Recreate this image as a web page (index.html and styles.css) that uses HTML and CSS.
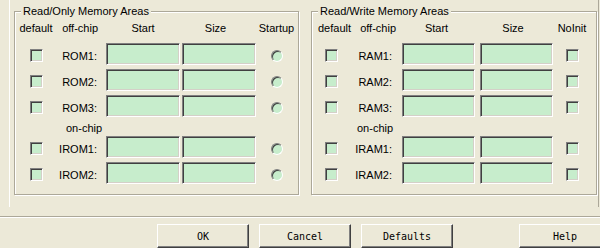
FILE: index.html
```html
<!DOCTYPE html>
<html lang="en">
<head>
    <meta charset="UTF-8">
    <meta name="viewport" content="width=device-width, initial-scale=1.0">
    <title>Memory Areas</title>
    <link rel="stylesheet" href="styles.css">
</head>
<body>
    <div class="page">
        <div class="panel">
            <div class="group group-ro">
                <div class="caption">Read/Only Memory Areas</div>
                <div class="grid grid-ro">
                    <div class="hdr">default</div>
                    <div class="hdr hdr-chip">off-chip</div>
                    <div class="hdr hdr-start">Start</div>
                    <div class="hdr hdr-size">Size</div>
                    <div class="hdr">Startup</div>

                    <div class="chk"></div>
                    <div class="lbl">ROM1:</div>
                    <div class="edit"></div>
                    <div class="edit"></div>
                    <div class="radio"></div>

                    <div class="chk"></div>
                    <div class="lbl">ROM2:</div>
                    <div class="edit"></div>
                    <div class="edit"></div>
                    <div class="radio"></div>

                    <div class="chk"></div>
                    <div class="lbl">ROM3:</div>
                    <div class="edit"></div>
                    <div class="edit"></div>
                    <div class="radio"></div>

                    <div class="onchip">on-chip</div>

                    <div class="chk"></div>
                    <div class="lbl">IROM1:</div>
                    <div class="edit"></div>
                    <div class="edit"></div>
                    <div class="radio"></div>

                    <div class="chk"></div>
                    <div class="lbl">IROM2:</div>
                    <div class="edit"></div>
                    <div class="edit"></div>
                    <div class="radio"></div>
                </div>
            </div>

            <div class="group group-rw">
                <div class="caption">Read/Write Memory Areas</div>
                <div class="grid grid-rw">
                    <div class="hdr hdr-default">default</div>
                    <div class="hdr hdr-chip">off-chip</div>
                    <div class="hdr hdr-start">Start</div>
                    <div class="hdr hdr-size">Size</div>
                    <div class="hdr">NoInit</div>

                    <div class="chk"></div>
                    <div class="lbl">RAM1:</div>
                    <div class="edit"></div>
                    <div class="edit"></div>
                    <div class="chk"></div>

                    <div class="chk"></div>
                    <div class="lbl">RAM2:</div>
                    <div class="edit"></div>
                    <div class="edit"></div>
                    <div class="chk"></div>

                    <div class="chk"></div>
                    <div class="lbl">RAM3:</div>
                    <div class="edit"></div>
                    <div class="edit"></div>
                    <div class="chk"></div>

                    <div class="onchip">on-chip</div>

                    <div class="chk"></div>
                    <div class="lbl">IRAM1:</div>
                    <div class="edit"></div>
                    <div class="edit"></div>
                    <div class="chk"></div>

                    <div class="chk"></div>
                    <div class="lbl">IRAM2:</div>
                    <div class="edit"></div>
                    <div class="edit"></div>
                    <div class="chk"></div>
                </div>
            </div>
        </div>

        <div class="separator"></div>

        <div class="buttons">
            <div class="btn">OK</div>
            <div class="btn">Cancel</div>
            <div class="btn">Defaults</div>
            <div class="btn btn-help">Help</div>
        </div>
    </div>
</body>
</html>
```

FILE: styles.css
```css
body {
    margin: 0;
    background: #ece9d8;
    font-family: "Liberation Sans", Arial, sans-serif;
    font-size: 11px;
    color: #000;
    overflow: hidden;
}
.page {
    width: 600px;
    height: 248px;
    overflow: hidden;
}
.panel {
    display: flex;
    gap: 12px;
    width: 590px;
    margin-left: 9px;
    padding: 0 1px 12px 4px;
    box-sizing: border-box;
    border-left: 1px solid #fff;
    border-right: 1px solid #aca899;
}

/* etched group box */
.group {
    margin-top: 11px;
    padding: 0 0 10px 0;
    border: 1px solid #aca899;
    box-shadow: inset 1px 1px 0 #fff, 1px 1px 0 #fff;
}
.group-ro {
    width: 283px;
}
.group-rw {
    width: 279px;
    padding-right: 5px;
}
.caption {
    width: fit-content;
    margin: -7px 0 4px 6px;
    padding: 0 2px;
    line-height: 13px;
    background: #ece9d8;
}

.grid {
    display: grid;
    grid-template-rows: 17px 22px 22px 22px 11px 22px 22px;
    row-gap: 4px;
}
.grid-ro {
    grid-template-columns: 42px 49px 76px 74px 41px;
}
.grid-rw {
    grid-template-columns: 38px 52px 78px 73px 38px;
}

.hdr {
    align-self: start;
    line-height: 13px;
    text-align: center;
    white-space: nowrap;
}
.hdr-chip {
    text-align: right;
    padding-right: 8px;
}
.grid-rw .hdr-chip {
    padding-right: 6px;
}
.grid-ro .hdr-start {
    padding-right: 2px;
}
.grid-rw .hdr-start {
    padding-right: 9px;
}
.hdr-size {
    padding-right: 7px;
}
.hdr-default {
    padding-left: 6px;
}

.lbl {
    align-self: center;
    line-height: 13px;
    padding-top: 4px;
    padding-right: 9px;
    text-align: right;
    white-space: nowrap;
}
.grid-rw .lbl {
    padding-right: 10px;
}
.onchip {
    grid-column: 1 / -1;
    line-height: 15px;
    height: 11px;
    padding-left: 51px;
}
.grid-rw .onchip {
    padding-left: 45px;
}

/* sunken controls, green fill */
.edit {
    width: 74px;
    height: 22px;
    box-sizing: border-box;
    background: #c7edcc;
    border: 1px solid;
    border-color: #808080 #fff #fff #808080;
    box-shadow: inset 1px 1px 0 #404040, inset -1px -1px 0 #d4d0c8;
}
.grid-rw .edit {
    width: 73px;
}
.chk {
    justify-self: center;
    align-self: center;
    width: 13px;
    height: 13px;
    margin-top: 2px;
    box-sizing: border-box;
    background: #c7edcc;
    border: 1px solid;
    border-color: #808080 #fff #fff #808080;
    box-shadow: inset 1px 1px 0 #404040, inset -1px -1px 0 #d4d0c8;
}
.radio {
    justify-self: center;
    align-self: center;
    width: 12px;
    height: 12px;
    margin-top: 3px;
    box-sizing: border-box;
    border-radius: 50%;
    background: #c7edcc;
    border: 1px solid;
    border-color: #808080 #fff #fff #808080;
    box-shadow: inset 1px 1px 0 #404040;
}

.separator {
    margin-top: 9px;
    border-top: 1px solid #aca899;
    border-bottom: 1px solid #fff;
}
.buttons {
    display: flex;
    gap: 10px;
    margin-top: 6px;
    padding-left: 157px;
}
.btn {
    flex-shrink: 0;
    display: flex;
    align-items: center;
    justify-content: center;
    width: 92px;
    height: 24px;
    box-sizing: border-box;
    background: #ece9d8;
    border: 1px solid;
    border-color: #fff #404040 #404040 #fff;
    box-shadow: inset -1px -1px 0 #808080;
    font-family: "DejaVu Sans Mono", "Liberation Mono", monospace;
    font-size: 10px;
}
.btn-help {
    margin-left: 56px;
}
```
